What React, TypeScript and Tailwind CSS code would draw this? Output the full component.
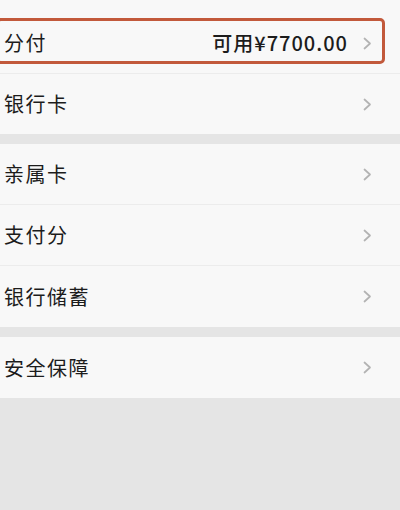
import { ReactNode } from "react";

function Chevron() {
  return (
    <svg width="9" height="13" viewBox="0 0 9 13" fill="none" aria-hidden>
      <path d="M1.5 1.5 L7 6.5 L1.5 11.5" stroke="#b3b3b3" strokeWidth="1.7" strokeLinecap="round" strokeLinejoin="round" />
    </svg>
  );
}

function Row({ label, right, divider = true, h = "h-[61px]", children }: { label: string; right?: string; divider?: boolean; h?: string; children?: ReactNode }) {
  return (
    <div className={`relative flex items-center ${h} pl-[4px] pr-[28px] bg-[#f8f8f8] ${divider ? "border-b border-[#ececec]" : ""}`}>
      <span className="flex-1 text-[20px] tracking-[1.5px] text-[#1c1c1c]">{label}</span>
      {right && <span className="mr-[15px] text-[20px] font-medium tracking-[1px] text-[#1c1c1c]">{right}</span>}
      <Chevron />
      {children}
    </div>
  );
}

export default function App() {
  return (
    <div className="flex h-[510px] w-[400px] flex-col bg-[#e5e5e5] font-['Noto_Sans_CJK_SC','Noto_Sans',sans-serif]">
      <div className="h-[13px] bg-[#f8f8f8]" />
      <Row label="分付" right="可用¥7700.00">
        {/* highlight frame drawn over the row */}
        <div className="absolute -left-[4px] top-[5px] bottom-[9px] right-[15px] rounded-[5px] border-[3px] border-[#c2593b]" />
      </Row>
      <Row label="银行卡" divider={false} h="h-[60px]" />
      <div className="h-[10px] bg-[#e5e5e5]" />
      <Row label="亲属卡" />
      <Row label="支付分" />
      <Row label="银行储蓄" divider={false} h="h-[61px]" />
      <div className="h-[10px] bg-[#e5e5e5]" />
      <Row label="安全保障" divider={false} />
      <div className="flex-1" />
    </div>
  );
}
